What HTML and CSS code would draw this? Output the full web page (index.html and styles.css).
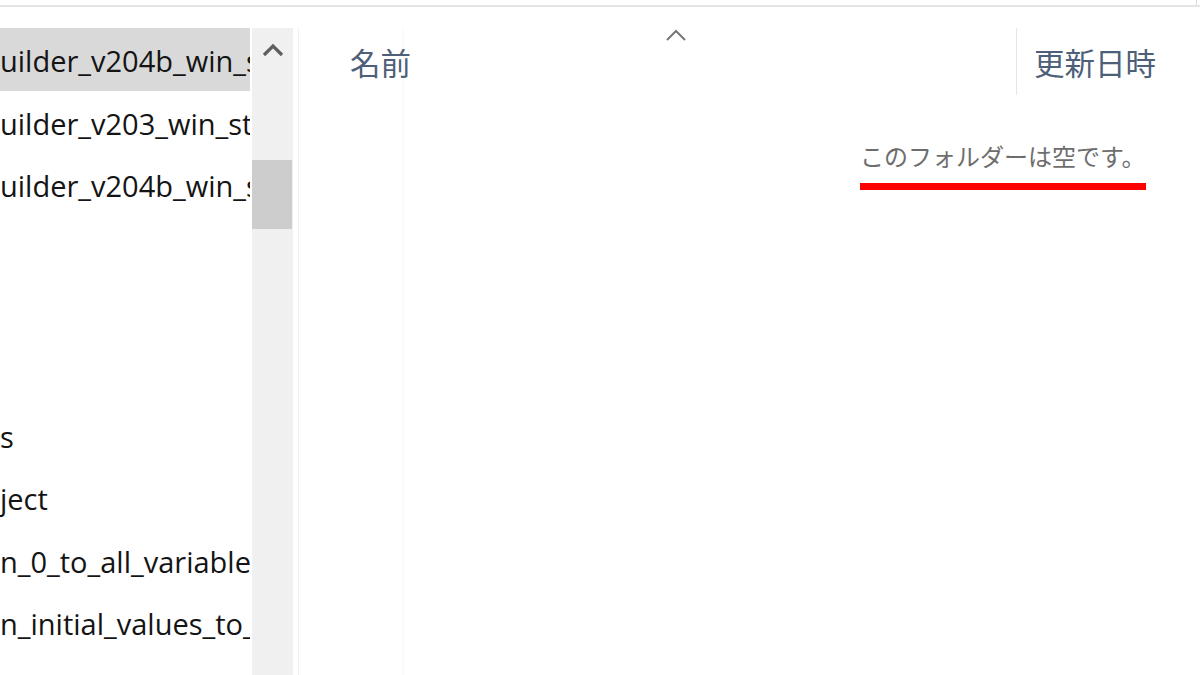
FILE: index.html
```html
<!DOCTYPE html>
<html lang="ja">

<head>
    <meta charset="UTF-8">
    <meta name="viewport" content="width=device-width, initial-scale=1.0">
    <title>エクスプローラー</title>
    <link rel="stylesheet" href="styles.css">
</head>

<body>
    <div class="titlebar"><span class="corner"></span></div>
    <div class="window">
        <div class="nav">
            <div class="nav-item selected">uilder_v204b_win_setup</div>
            <div class="nav-item">uilder_v203_win_standalone</div>
            <div class="nav-item">uilder_v204b_win_setup</div>
            <div class="nav-item"></div>
            <div class="nav-item"></div>
            <div class="nav-item"></div>
            <div class="nav-item">s</div>
            <div class="nav-item">ject</div>
            <div class="nav-item">n_0_to_all_variables</div>
            <div class="nav-item">n_initial_values_to_all</div>
        </div>
        <div class="scrollbar">
            <div class="scroll-up">
                <svg width="22" height="14" viewBox="0 0 22 14">
                    <path d="M2 12 L11 3 L20 12" fill="none" stroke="#5f5f5f" stroke-width="3.2"/>
                </svg>
            </div>
            <div class="scroll-track">
                <div class="scroll-thumb"></div>
            </div>
        </div>
        <div class="splitter"></div>
        <div class="content">
            <div class="header">
                <div class="col col-name">
                    名前
                    <svg class="sort" width="22" height="12" viewBox="0 0 22 12">
                        <path d="M2 11 L11 2 L20 11" fill="none" stroke="#777" stroke-width="2"/>
                    </svg>
                </div>
                <div class="col col-date">更新日時</div>
            </div>
            <div class="empty">
                <span class="empty-text">このフォルダーは空です。</span>
            </div>
        </div>
    </div>
</body>

</html>
```

FILE: styles.css
```css
body {
    margin: 0;
    padding: 0;
    background-color: #fff;
    font-family: "Open Sans", "Noto Sans CJK JP", sans-serif;
    overflow: hidden;
}

.titlebar {
    height: 5px;
    border-bottom: 2px solid #e4e4e4;
    position: relative;
}

.titlebar .corner {
    position: absolute;
    right: 3px;
    top: 0;
    width: 1px;
    height: 5px;
    background-color: #d8d8d8;
}

.window {
    display: flex;
    height: 668px;
    padding-top: 21px;
    box-sizing: border-box;
}

/* navigation pane */
.nav {
    width: 252px;
    flex-shrink: 0;
}

.nav-item {
    width: 250px;
    height: 62.6px;
    box-sizing: border-box;
    padding-top: 2px;
    line-height: 62px;
    font-size: 29px;
    color: #141414;
    white-space: nowrap;
    overflow: hidden;
}

.nav-item.selected {
    background-color: #d9d9d9;
}

.scrollbar {
    width: 41px;
    flex-shrink: 0;
    background-color: #f0f0f0;
    display: flex;
    flex-direction: column;
}

.scroll-up {
    height: 44px;
    display: flex;
    justify-content: center;
    align-items: center;
    padding-left: 1px;
}

.scroll-track {
    padding-top: 88px;
}

.scroll-thumb {
    width: 40px;
    height: 69px;
    background-color: #cdcdcd;
}

.splitter {
    width: 1px;
    margin-left: 5px;
    background-color: #f1f1f1;
    flex-shrink: 0;
}

/* file list */
.content {
    flex: 1;
    background-image: linear-gradient(#fbfbfb, #fbfbfb);
    background-size: 2px 100%;
    background-position: 103px 0;
    background-repeat: no-repeat;
}

.header {
    display: flex;
    height: 67px;
    color: #4d5f79;
    font-size: 30.5px;
}

.col {
    display: flex;
    align-items: center;
}

.col-name {
    width: 718px;
    padding-left: 51px;
    box-sizing: border-box;
    position: relative;
    border-right: 1px solid #e6e6e6;
}

.col-name .sort {
    position: absolute;
    left: 366px;
    top: 1px;
}

.col-date {
    padding-left: 17px;
}

.empty {
    padding-left: 561px;
    padding-top: 44px;
}

.empty-text {
    display: inline-block;
    font-size: 24px;
    color: #6d6d6d;
    padding-bottom: 8px;
    border-bottom: 7px solid #ff0000;
    line-height: 36px;
}
```
